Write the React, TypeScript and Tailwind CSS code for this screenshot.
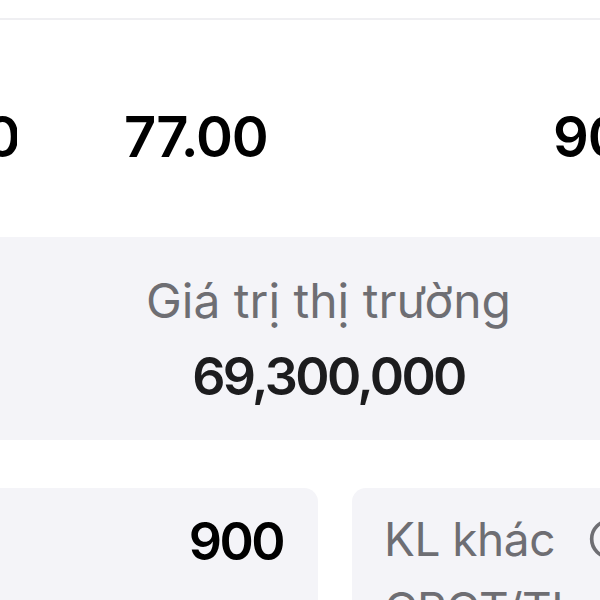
import React from "react";

const font = {fontFamily: "Inter, 'Noto Sans', sans-serif"};

const App: React.FC = () => {
    return (
        <div className="w-[600px] h-[600px] overflow-hidden bg-white flex flex-col" style={font}>
            {/* header strip */}
            <div className="h-[18px] shrink-0 bg-white"/>
            <div className="h-[2px] shrink-0 bg-[#efeff2]"/>

            {/* price row */}
            <div className="h-[217px] shrink-0 pt-[16px] flex items-center">
                <div className="flex items-center text-[56px] leading-none font-semibold tracking-[-1px] text-black whitespace-nowrap">
                    <span className="-ml-[16px] w-[33px] overflow-hidden">0</span>
                    <span className="ml-[107px] w-[160px]">77.00</span>
                    <span className="ml-[269px]">900</span>
                </div>
            </div>

            {/* market value */}
            <div className="h-[203px] shrink-0 bg-[#f4f4f8] pl-[57px] pt-[40px] flex flex-col items-center gap-[26px]">
                <div className="text-[48px] leading-none text-[#6e6e73] whitespace-nowrap">Giá trị thị trường</div>
                <div className="text-[52px] leading-none font-semibold tracking-[-2.6px] text-[#1c1c1e] whitespace-nowrap">69,300,000</div>
            </div>

            <div className="h-[48px] shrink-0"/>

            {/* bottom cards */}
            <div className="flex gap-[34px] shrink-0">
                <div className="w-[338px] h-[200px] -ml-[20px] bg-[#f4f4f8] rounded-tr-[14px] flex justify-end pr-[35px] pt-[28px]">
                    <span className="text-[52px] leading-none font-semibold tracking-[-2.5px] text-black">900</span>
                </div>
                <div className="flex-1 min-w-0 h-[200px] bg-[#f4f4f8] rounded-tl-[14px] pl-[32px] pt-[27px] whitespace-nowrap">
                    <div className="flex items-center gap-[33px] h-[47px]">
                        <span className="text-[46px] leading-none tracking-[-0.5px] text-[#6e6e73]">KL khác</span>
                        <svg width="44" height="44" viewBox="0 0 24 24" fill="none" stroke="#6e6e73" strokeWidth={2}
                             className="shrink-0">
                            <circle cx="12" cy="12" r="10"/>
                            <line x1="12" y1="11" x2="12" y2="17"/>
                            <circle cx="12" cy="7.5" r="0.6" fill="#6e6e73"/>
                        </svg>
                    </div>
                    <div className="mt-[24px] text-[46px] leading-none tracking-[-0.5px] text-[#6e6e73]">CPCT/TL</div>
                </div>
            </div>
        </div>
    );
};

export default App;
